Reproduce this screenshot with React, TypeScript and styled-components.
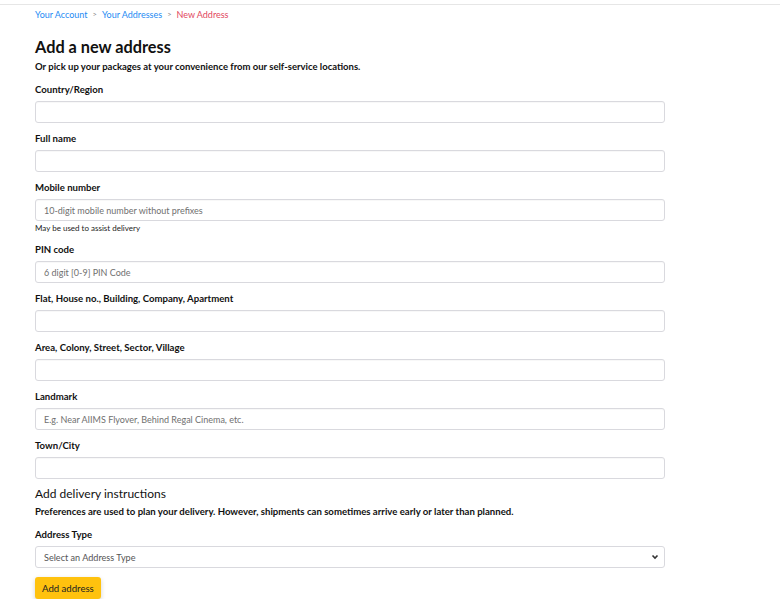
import React from "react";
import styled, { createGlobalStyle } from "styled-components";

const Global = createGlobalStyle`
  html, body { margin: 0; padding: 0; background: #fff; }
  body { font-family: Lato, "Open Sans", sans-serif; color: #111; }
  * { box-sizing: border-box; }
`;

const TopBar = styled.div`
  height: 5px;
  border-bottom: 1px solid #e6e6e6;
`;

const Page = styled.main`
  padding: 0 0 0 35px;
  width: 665px;
`;

const Crumbs = styled.nav`
  display: flex;
  align-items: center;
  gap: 5px;
  height: 18px;
  font-size: 9px;
`;

const Crumb = styled.a<{ $active?: boolean }>`
  color: ${(p) => (p.$active ? "#e2475e" : "#258bf3")};
  text-decoration: none;
`;

const Sep = styled.span`
  color: #888;
  font-size: 7.5px;
`;

const Title = styled.h1`
  margin: 13px 0 0;
  font-size: 16.3px;
  line-height: 22px;
  font-weight: 700;
  color: #111;
`;

const Sub = styled.p`
  margin: 2px 0 0;
  font-size: 9.5px;
  line-height: 14px;
  font-weight: 700;
`;

const Form = styled.form`
  display: flex;
  flex-direction: column;
  margin-top: 8px;
`;

const Field = styled.div`
  display: flex;
  flex-direction: column;
  margin-bottom: 8px;
`;

const Label = styled.label`
  font-size: 9.6px;
  line-height: 14px;
  font-weight: 700;
  padding-top: 1px;
  margin-bottom: 4px;
`;

const Input = styled.input`
  display: block;
  width: 630px;
  height: 22px;
  border: 1px solid #d9d9de;
  border-radius: 3px;
  padding: 0 8px;
  font-family: inherit;
  font-size: 9px;
  color: #111;
  box-shadow: inset 0 1px 1px rgba(0,0,0,0.03);
  &::placeholder { color: #707070; }
`;

const Hint = styled.div`
  font-size: 8px;
  line-height: 11px;
  margin-top: 2px;
  color: #222;
`;

const SectionTitle = styled.h2`
  margin: -2px 0 0;
  font-size: 12px;
  line-height: 17px;
  font-weight: 400;
  color: #111;
`;

const SectionSub = styled.p`
  margin: 3px 0 8px;
  font-size: 9.6px;
  line-height: 14px;
  font-weight: 700;
`;

const SelectWrap = styled.div`
  position: relative;
  width: 630px;
  height: 22px;
`;

const Select = styled.select`
  display: block;
  appearance: none;
  width: 630px;
  height: 22px;
  border: 1px solid #d9d9de;
  border-radius: 3px;
  padding: 0 8px;
  background: #fff;
  font-family: inherit;
  font-size: 9.1px;
  color: #555;
`;

const Chevron = styled.svg`
  position: absolute;
  right: 6px;
  top: 8px;
  pointer-events: none;
`;

const Button = styled.button`
  align-self: flex-start;
  margin-top: 1px;
  height: 22px;
  padding: 0 7px;
  border: none;
  border-radius: 3px;
  background: #ffc20e;
  box-shadow: 0 2px 5px rgba(0,0,0,0.18);
  font-family: inherit;
  font-size: 9.6px;
  color: #222;
`;

const fields: { label: string; placeholder?: string; hint?: string }[] = [
  { label: "Country/Region" },
  { label: "Full name" },
  { label: "Mobile number", placeholder: "10-digit mobile number without prefixes", hint: "May be used to assist delivery" },
  { label: "PIN code", placeholder: "6 digit [0-9] PIN Code" },
  { label: "Flat, House no., Building, Company, Apartment" },
  { label: "Area, Colony, Street, Sector, Village" },
  { label: "Landmark", placeholder: "E.g. Near AIIMS Flyover, Behind Regal Cinema, etc." },
  { label: "Town/City" },
];

export default function App() {
  return (
    <>
      <Global />
      <TopBar />
      <Page>
        <Crumbs>
          <Crumb href="#">Your Account</Crumb>
          <Sep>&gt;</Sep>
          <Crumb href="#">Your Addresses</Crumb>
          <Sep>&gt;</Sep>
          <Crumb $active>New Address</Crumb>
        </Crumbs>
        <Title>Add a new address</Title>
        <Sub>Or pick up your packages at your convenience from our self-service locations.</Sub>
        <Form onSubmit={(e) => e.preventDefault()}>
          {fields.map((f) => (
            <Field key={f.label}>
              <Label>{f.label}</Label>
              <Input placeholder={f.placeholder} />
              {f.hint && <Hint>{f.hint}</Hint>}
            </Field>
          ))}
          <SectionTitle>Add delivery instructions</SectionTitle>
          <SectionSub>Preferences are used to plan your delivery. However, shipments can sometimes arrive early or later than planned.</SectionSub>
          <Field>
            <Label>Address Type</Label>
            <SelectWrap>
              <Select defaultValue="">
                <option value="">Select an Address Type</option>
                <option>Home</option>
                <option>Office</option>
              </Select>
              <Chevron width="8" height="6" viewBox="0 0 8 6">
                <path d="M1.5 1.5 L4 4 L6.5 1.5" fill="none" stroke="#333" strokeWidth="1.6" />
              </Chevron>
            </SelectWrap>
          </Field>
          <Button type="submit">Add address</Button>
        </Form>
      </Page>
    </>
  );
}
